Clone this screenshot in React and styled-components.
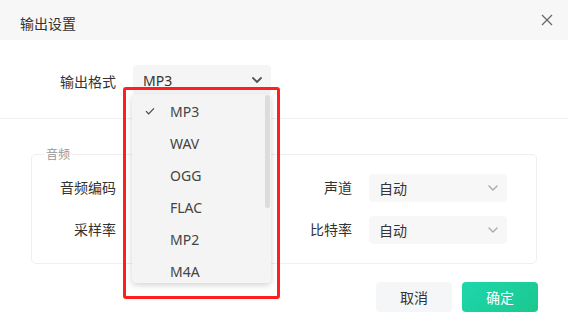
import styled, { createGlobalStyle } from "styled-components";

const Global = createGlobalStyle`
  body {
    margin: 0;
    background: #fff;
    font-family: "Noto Sans", "Noto Sans CJK SC", sans-serif;
    color: #333;
  }
`

const Dialog = styled.div`
  width: 568px;
  height: 332px;
  background: #fff;
  overflow: hidden;
`

const Header = styled.div`
  height: 40px;
  background: #f7f7f7;
  display: flex;
  align-items: center;
  justify-content: space-between;
  padding: 0 15px 0 20px;
`

const Title = styled.div`
  font-size: 14px;
  line-height: 20px;
  padding-top: 7px;
  color: #333;
`

const Close = styled.button`
  border: 0;
  background: none;
  padding: 0;
  width: 12px;
  height: 12px;
  display: flex;
  cursor: pointer;
`

const FormatRow = styled.div`
  display: flex;
  align-items: center;
  padding: 25px 0 23px 0;
  border-bottom: 1px solid #efefef;
`

const Label = styled.div`
  width: ${p => p.$w}px;
  margin-right: 17px;
  padding-top: 3px;
  text-align: right;
  font-size: 14px;
  line-height: 20px;
  color: #333;
  white-space: nowrap;
`

const SelectWrap = styled.div`
  position: relative;
`

const Select = styled.div`
  width: 138px;
  height: ${p => p.$h}px;
  box-sizing: border-box;
  background: ${p => p.$bg || "#f7f7f7"};
  border-radius: 4px;
  display: flex;
  align-items: center;
  justify-content: space-between;
  padding: 0 8px 0 10px;
  font-size: 14px;
  color: #333;
`

const Chevron = ({ color, bold }) => (
  <svg width="12" height="12" viewBox="0 0 12 12">
    <path d="M2 4l4 4 4-4" fill="none" stroke={color} strokeWidth={bold ? 1.8 : 1.4} strokeLinecap="round" strokeLinejoin="round" />
  </svg>
)

const Menu = styled.div`
  position: absolute;
  left: -1px;
  top: 29px;
  width: 139px;
  height: 189px;
  background: #f4f4f4;
  border-radius: 4px;
  box-shadow: 0 2px 6px rgba(0, 0, 0, 0.18);
  overflow: hidden;
  z-index: 5;
  padding-top: 1px;
  box-sizing: border-box;
`

const Thumb = styled.div`
  position: absolute;
  right: 1px;
  top: 1px;
  width: 5px;
  height: 113px;
  border-radius: 3px;
  background: #dcdcdc;
`

const Item = styled.div`
  height: 32px;
  display: flex;
  align-items: center;
  font-size: 14px;
  color: #444;
`

const Check = styled.span`
  width: 38px;
  padding-left: 13px;
  box-sizing: border-box;
  display: flex;
  align-items: center;
`

const Marker = styled.div`
  position: absolute;
  left: -10px;
  top: 22px;
  width: 157px;
  height: 212px;
  box-sizing: border-box;
  border: 3px solid #ff1f1f;
  border-radius: 3px;
  z-index: 6;
  pointer-events: none;
`

const Group = styled.div`
  position: relative;
  margin: 35px 31px 0 31px;
  height: 110px;
  box-sizing: border-box;
  border: 1px solid #efefef;
  border-radius: 5px;
  padding-top: 19px;
  display: grid;
  grid-template-columns: 84px 138px 64px 138px;
  grid-auto-rows: 28px;
  column-gap: 17px;
  row-gap: 14px;
  align-items: center;
`

const Legend = styled.div`
  position: absolute;
  left: 12px;
  top: -8px;
  padding: 0 2px;
  background: #fff;
  font-size: 12px;
  line-height: 16px;
  color: #999;
`

const GridLabel = styled.div`
  text-align: right;
  font-size: 14px;
  line-height: 20px;
  color: #333;
  white-space: nowrap;
`

const Footer = styled.div`
  display: flex;
  justify-content: flex-end;
  gap: 10px;
  padding: 18px 30px 0 0;
`

const Button = styled.button`
  width: 76px;
  height: 30px;
  border: 0;
  border-radius: 4px;
  font-family: inherit;
  font-size: 14px;
  cursor: pointer;
  color: ${p => (p.$primary ? "#fff" : "#333")};
  background: ${p => (p.$primary ? "linear-gradient(135deg, #1dd7ab, #1bc88e)" : "#f5f6f7")};
`

const formats = ["MP3", "WAV", "OGG", "FLAC", "MP2", "M4A"]

const App = () => {
  return (
    <>
      <Global />
      <Dialog>
        <Header>
          <Title>输出设置</Title>
          <Close aria-label="关闭">
            <svg width="12" height="12" viewBox="0 0 12 12">
              <path d="M1 1l10 10M11 1L1 11" stroke="#666" strokeWidth="1.2" />
            </svg>
          </Close>
        </Header>

        <FormatRow>
          <Label $w={116}>输出格式</Label>
          <SelectWrap>
            <Select $h={30} $bg="#f5f5f5">
              MP3
              <Chevron color="#555" bold />
            </Select>
            <Menu>
              {formats.map(f => (
                <Item key={f}>
                  <Check>
                    {f === "MP3" && (
                      <svg width="10" height="10" viewBox="0 0 10 10">
                        <path d="M1 5.2l2.6 2.6L9 2.4" fill="none" stroke="#444" strokeWidth="1.2" />
                      </svg>
                    )}
                  </Check>
                  {f}
                </Item>
              ))}
              <Thumb />
            </Menu>
            <Marker />
          </SelectWrap>
        </FormatRow>

        <Group>
          <Legend>音频</Legend>
          <GridLabel>音频编码</GridLabel>
          <Select $h={28}>自动<Chevron color="#aaa" /></Select>
          <GridLabel>声道</GridLabel>
          <Select $h={28}>自动<Chevron color="#aaa" /></Select>
          <GridLabel>采样率</GridLabel>
          <Select $h={28}>自动<Chevron color="#aaa" /></Select>
          <GridLabel>比特率</GridLabel>
          <Select $h={28}>自动<Chevron color="#aaa" /></Select>
        </Group>

        <Footer>
          <Button>取消</Button>
          <Button $primary>确定</Button>
        </Footer>
      </Dialog>
    </>
  )
}

export default App;
